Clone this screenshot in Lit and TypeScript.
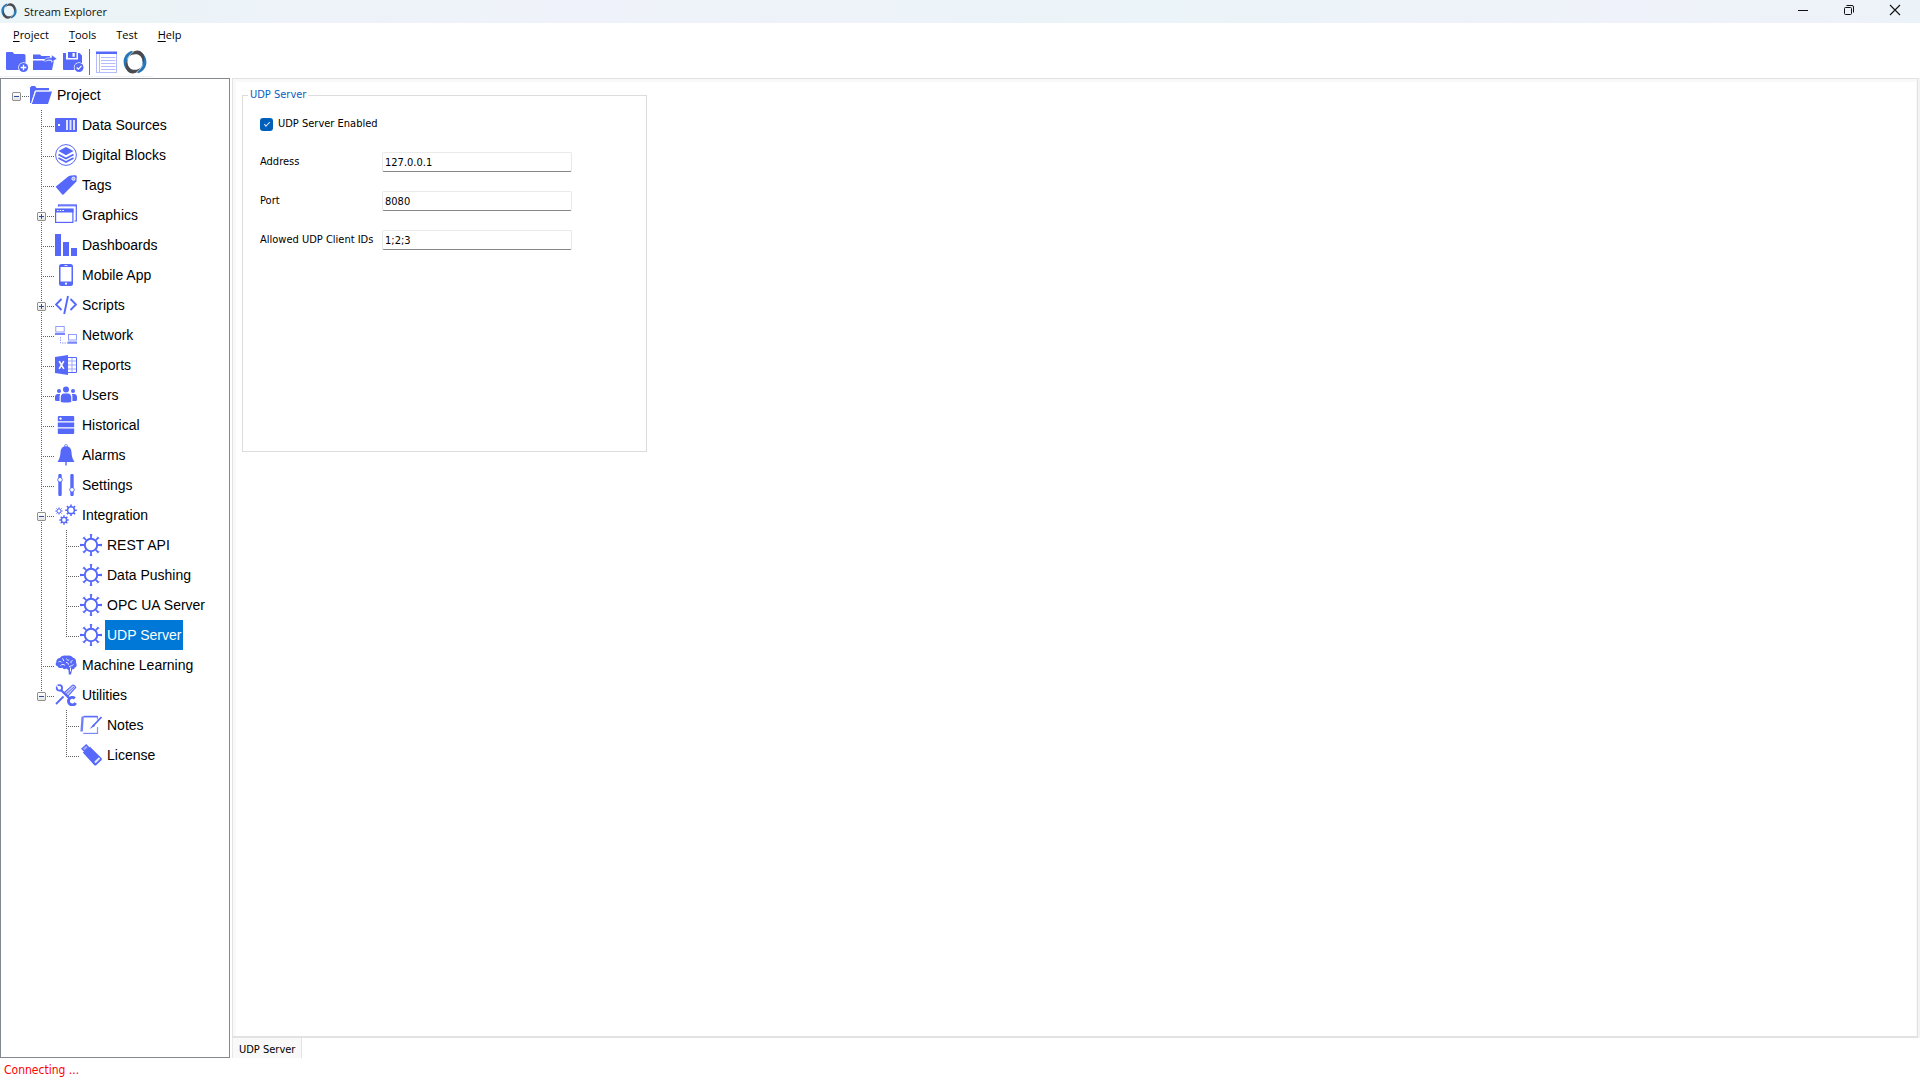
import { LitElement, html, css, svg, nothing, type TemplateResult, type SVGTemplateResult } from "lit";
import { customElement, property, state } from "lit/decorators.js";
import { classMap } from "lit/directives/class-map.js";

const GEAR = svg`
  <g stroke="currentColor" stroke-width="1.8" fill="none">
    <circle cx="11" cy="11" r="6.200" stroke-width="2" />
    <path d="M11 0v4M11 18v4M0 11h4M18 11h4M3.4 3.4l2.8 2.8M15.8 15.8l2.8 2.8M3.4 18.6l2.8-2.8M15.8 6.2l2.8-2.8" />
    <path d="M9.5 .9h3M9.5 21.1h3M.9 9.5v3M21.1 9.5v3" stroke-width="1" opacity=".5" />
    <path d="M2.500 5l2.500-2.500M17 2.500L19.500 5M2.500 17L5 19.500M17 19.500l2.500-2.500" stroke-width="1" opacity=".5" />
  </g>`;

const smallGear = (cx: number, cy: number, r: number, w: number) => {
  const teeth = Array.from({ length: 8 }, (_, i) => {
    const a = (i * Math.PI) / 4;
    const [c, s] = [Math.cos(a), Math.sin(a)];
    const [inner, outer] = [r, r + w * 1.5];
    return `M${cx + c * inner} ${cy + s * inner}L${cx + c * outer} ${cy + s * outer}`;
  }).join("");
  return svg`<circle cx=${cx} cy=${cy} r=${r} fill="none" stroke="currentColor" stroke-width=${w} />
    <path d=${teeth} stroke="currentColor" stroke-width=${w} />`;
};

const ICONS: Record<string, SVGTemplateResult> = {
  folder: svg`
    <path d="M0 19V3.5L1.5 2H5l1.5 2H19v2.5H5L1.2 19z" fill="currentColor" />
    <path d="M6 7.5h16L18 20H1.8z" fill="currentColor" />
    <path d="M1.6 18.5L5.4 7H20" fill="none" stroke="#fff" stroke-width=".8" />`,
  source: svg`
    <rect y="4" width="22" height="14" rx="1" fill="currentColor" />
    <path d="M11 6h2v10h-2zM14.5 6h2v10h-2zM18 6h2v10h-2z" fill="#dfe3ff" />
    <rect x="3" y="10" width="2" height="2" fill="#fff" />`,
  blocks: svg`
    <circle cx="11" cy="11" r="10.4" fill="none" stroke="currentColor" stroke-width="1" />
    <path d="M11 3l7.5 4-7.5 4.2L3.500 7z" fill="currentColor" />
    <path d="M3.500 10.500l7.500 4 7.500-4M3.500 14l7.500 4 7.500-4" fill="none" stroke="currentColor" stroke-width="1.7" />`,
  tag: svg`
    <path d="M.6 12.800L13.500 2.200Q16 .9 20.500 1.200Q21.800 1.500 21.800 3l-.4 4.500L8.500 20.500Q7.700 21 7 20.200z" fill="currentColor" />
    <circle cx="18.500" cy="4.700" r="1.600" fill="#9ba6ff" stroke="#fff" stroke-width=".9" />`,
  windows: svg`
    <path d="M3.500 2.500V1H21.300V17H19.500" fill="none" stroke="currentColor" stroke-width="1.200" />
    <path d="M3 .5h18.800v2H3z" fill="currentColor" opacity=".7" />
    <rect x=".6" y="5.500" width="17.300" height="12.900" fill="#fff" stroke="currentColor" stroke-width="1.200" />
    <path d="M0 4.500h18.500v4H0z" fill="currentColor" />
    <path d="M2 6.500h1.500M4.700 6.500h1.500M7.400 6.500h1.500" stroke="#fff" stroke-width="1.200" />`,
  bars: svg`<path d="M0 0h6v22H0zM8 8h6v14H8zM16 14h6v8h-6z" fill="currentColor" />`,
  phone: svg`
    <rect x="4" width="14" height="22" rx="2.500" fill="currentColor" />
    <path d="M5.500 3h11v14.500h-11z" fill="#fff" />
    <path d="M9.500 1.500h3" stroke="#fff" stroke-width=".8" /><circle cx="11" cy="19.700" r="1.100" fill="#fff" />`,
  code: svg`<path d="M6.500 5L1 10.500 6.500 16M15.500 5l5.500 5.500-5.500 5.500M13 2L9.200 20" fill="none" stroke="currentColor" stroke-width="1.900" />`,
  network: svg`
    <g fill="none" stroke="currentColor" stroke-width=".9" opacity=".7">
      <rect x=".8" y="2.500" width="8.400" height="5.500" /><rect x="13.500" y="10.500" width="8" height="5.500" />
      <path d="M5.500 13v6h7" stroke-dasharray="1.500 1" />
    </g>
    <path d="M0 9h10v2H0zM12.500 17.500h9.500v2.200h-9.500z" fill="currentColor" opacity=".8" />`,
  excel: svg`
    <path d="M12 3.500h9.500v15H12" fill="#fff" stroke="currentColor" stroke-width="1" />
    <path d="M12 7h9.500M12 11h9.500M12 15h9.500M17 3.500v15" stroke="currentColor" stroke-width=".9" opacity=".6" />
    <path d="M0 3L13 1v20L0 19z" fill="currentColor" />
    <path d="M4.200 7.200l4.600 7.600M8.800 7.200l-4.600 7.600" stroke="#fff" stroke-width="1.600" />`,
  users: svg`
    <g fill="currentColor">
      <circle cx="11" cy="5.500" r="3" /><circle cx="4" cy="7" r="2" /><circle cx="18" cy="7" r="2" />
      <path d="M5.800 18V13Q6.200 9.700 9 9.500h4q2.800.2 3.200 3.500v5q-5 1.200-10.400 0z" />
      <path d="M0 16.500V12.500Q.3 10.200 2.500 10h2.600Q4.500 11.500 4.600 13v4Q2 17.200 0 16.500zM22 16.500V12.500Q21.700 10.200 19.500 10h-2.600q.6 1.500.5 3v4q2.600.2 4.600-.5z" />
    </g>`,
  database: svg`
    <path d="M3.500 2h15l.7.700V7.200H2.800V2.700zM2.800 8.500h16.400v4.700H2.800zM2.800 14.600h16.400v4.600l-.8.800h-15l-.6-.8z" fill="currentColor" />
    <circle cx="5.500" cy="4.600" r="1.200" fill="#fff" />`,
  bell: svg`
    <circle cx="11" cy="2" r="1.500" fill="none" stroke="currentColor" stroke-width=".7" />
    <path d="M11 2.300c4 0 5.300 3 5.500 6 .2 4 1 6.500 3 9.700H2.500c2-3.200 2.800-5.700 3-9.700.2-3 1.500-6 5.500-6zM10.300 18h1.400v3.500h-1.400z" fill="currentColor" />`,
  sliders: svg`
    <path d="M5 1.500v19M17 1.500v19" stroke="currentColor" stroke-width="3.400" stroke-linecap="round" />
    <g fill="#fff" stroke="currentColor" stroke-width=".9"><circle cx="5" cy="5.800" r="2.300" /><circle cx="17" cy="15.800" r="2.300" /></g>`,
  gears: svg`${smallGear(4, 7, 2.1, 1)}${smallGear(16, 6.200, 3.400, 1.600)}${smallGear(9, 16, 2.600, 1.400)}`,
  gear: GEAR,
  brain: svg`
    <path d="M11.500 14.500c-2 1.300-3.500.5-4-.8-2.800.8-4.600 0-4.800-1.500C.6 12 .1 9.500 1.300 8.200 1.100 5.500 3 4 4.800 4 6.500 1.500 9.500 1 11.500 1.800c3-1 5.800.2 6.600 2 2.400.6 3.400 2.800 2.900 5 1.300 2 .6 4.200-1.200 4.700-.2 1.500-1.500 2-2.600 1.700L16 20.500h-2.200l-.3-4.200z" fill="currentColor" />
    <path d="M3.500 8c1.500-1 2.500-.5 3.200.4M7 4.500c1 .2 1.800 1.200 1.500 2.500M5.500 11.500c1.500-1.500 3.500-1.300 4.500 0M11.500 4.500c.3 1.500 1.500 2 2.700 1.500M11 8.500c1.500-.2 2.500.8 2.400 2.200M17.500 6.500c-1.500.3-2 1.500-1.300 2.700M14 12.800c1.500-1 3.500-1 4.500-2.300M15.500 13.500v4" fill="none" stroke="#fff" stroke-width=".9" />`,
  tools: svg`
    <path d="M1 20L8.500 12.500" stroke="currentColor" stroke-width="1.800" />
    <path d="M9 9L17.500 1.200q2.200-.3 3.300 2.200L13 12z" fill="#c7cdff" stroke="currentColor" stroke-width="1.100" />
    <path d="M11 10.300l8-7.300" stroke="currentColor" stroke-width=".9" />
    <path d="M5 5l9 9" stroke="currentColor" stroke-width="2.200" />
    <circle cx="4.400" cy="3.900" r="2.700" fill="#fff" stroke="currentColor" stroke-width="1.800" />
    <path d="M1.500 1.500l3 2.500" stroke="#fff" stroke-width="1.600" />
    <path d="M19.800 14.300a3.800 3.800 0 1 0 .8 4.700" fill="none" stroke="currentColor" stroke-width="2.900" />`,
  note: svg`
    <path d="M4 2.500h13.500v3M17.500 13v6.500H3.500" fill="none" stroke="currentColor" stroke-width="1.200" opacity=".7" />
    <path d="M1.500 2.500h2.300L2.800 17.500H.4zM3.500 1.700h14v1.700h-14z" fill="currentColor" opacity=".85" />
    <path d="M3 19.300h14.500" stroke="currentColor" stroke-width="1.500" opacity=".3" />
    <path d="M21.500 3L13 12" stroke="currentColor" stroke-width="1.700" />
    <path d="M13.500 10.300L9.500 15l5.500-3z" fill="currentColor" />`,
  usb: svg`
    <path d="M2 4.700L6.200 1l2.300 2.300L4.300 7z" fill="#aab3ff" stroke="currentColor" stroke-width="1.300" />
    <path d="M2.800 8.500L10 2.800 21.400 14q.9 1.300 0 2.200l-5.200 5q-1.200.9-2.100-.2z" fill="currentColor" />
    <path d="M14.200 17.700l4.700-4.500 1.300 1.500-4.500 4.500z" fill="#fff" opacity=".85" />`,
};

/** Two interlocking blue and charcoal crescents, used as the product mark. */
const ring = svg`
  <path d="M9 .8C3.500 2.500.5 7 .6 12c.1 3.500 1.400 6.300 3.600 8.500 1.200.5 2.200.3 2.800-.5C4.500 16 3.800 12.500 5 8.800 6 6.200 7.500 4 10.500 2.800z" fill="#2877b8" />
  <path d="M15 23.200c5.500-1.700 8.500-6.200 8.400-11.200-.1-3.500-1.400-6.300-3.600-8.500-1.200-.5-2.200-.3-2.800.5 2.500 4 3.200 7.500 2 11.200-1 2.600-2.500 4.800-5.500 6z" fill="#2877b8" />
  <path d="M6 6.500C8 2.500 11 .4 14.500.5c3.800.3 6 2.700 6.600 6.100.4 2.300.2 4.400-.9 6.400C19.500 8.800 18 5.300 14 4.300 11 3.800 8.500 4.500 6 6.500z" fill="#4b4b4f" />
  <path d="M18 17.500c-2 4-5 6.100-8.500 6-3.800-.3-6-2.700-6.600-6.100-.4-2.300-.2-4.400.9-6.400C4.500 15.200 6 18.700 10 19.700c3 .5 5.500-.2 8-2.200z" fill="#4b4b4f" />
  <path d="M4.300 9.500C5.500 6 7.800 3.500 10.500 2M19.700 14.500c-1.200 3.500-3.500 6-6.200 7.500" fill="none" stroke="#dfeaf2" stroke-width=".7" />`;

const TOOLS: Record<string, SVGTemplateResult> = {
  newProject: svg`
    <path d="M1 3Q1 2 2 2h5.500l1.700 2H19q1.500 0 1.500 1.500V20H2q-1 0-1-1z" fill="currentColor" />
    <circle cx="18.500" cy="17.500" r="5.300" fill="#fff" /><circle cx="18.500" cy="17.500" r="4.600" fill="currentColor" />
    <path d="M18.500 14.700v5.600M15.700 17.500h5.600" stroke="#fff" stroke-width="1.300" />`,
  openProject: svg`
    <path d="M0 4.500h7L8.500 6H17v3H0zM0 10.500h21L19 20H0z" fill="currentColor" />
    <path d="M10 10.500q3.500-3.500 8.500-3V4.800L24 8.800l-5.500 3.400V10q-3.500-.5-6 1.200z" fill="currentColor" stroke="#fff" stroke-width=".6" />`,
  save: svg`
    <path d="M2 3h3v6.500h12V3h1.500L21 5.500V20H3q-1 0-1-1V3z" fill="currentColor" />
    <path d="M7 2h8.500v6H7z" fill="currentColor" /><path d="M11.500 3h2.200v3.800h-2.200z" fill="#fff" />
    <circle cx="18" cy="17.500" r="5.200" fill="#fff" /><circle cx="18" cy="17.500" r="4.500" fill="currentColor" />
    <path d="M15.700 17.500l1.700 1.700 3-3.300" stroke="#fff" stroke-width="1.200" fill="none" />`,
  form: svg`
    <rect x="1.500" y="2.500" width="20" height="20" fill="#fff" stroke="#b4bcff" />
    <path d="M1 1.500h21V4H1z" fill="currentColor" />
    <path d="M4.500 4v18M6 7.500h14.500M6 10.500h14.500M6 13.500h14.500M6 16.500h14.500M6 19.500h14.500" stroke="#b4bcff" />`,
  stream: ring,
};

interface Node {
  label: string;
  icon: string;
  closed?: boolean;
  children?: Node[];
}

const PROJECT: Node = {
  label: "Project",
  icon: "folder",
  children: [
    { label: "Data Sources", icon: "source" },
    { label: "Digital Blocks", icon: "blocks" },
    { label: "Tags", icon: "tag" },
    { label: "Graphics", icon: "windows", closed: true },
    { label: "Dashboards", icon: "bars" },
    { label: "Mobile App", icon: "phone" },
    { label: "Scripts", icon: "code", closed: true },
    { label: "Network", icon: "network" },
    { label: "Reports", icon: "excel" },
    { label: "Users", icon: "users" },
    { label: "Historical", icon: "database" },
    { label: "Alarms", icon: "bell" },
    { label: "Settings", icon: "sliders" },
    {
      label: "Integration",
      icon: "gears",
      children: [
        { label: "REST API", icon: "gear" },
        { label: "Data Pushing", icon: "gear" },
        { label: "OPC UA Server", icon: "gear" },
        { label: "UDP Server", icon: "gear" },
      ],
    },
    { label: "Machine Learning", icon: "brain" },
    {
      label: "Utilities",
      icon: "tools",
      children: [
        { label: "Notes", icon: "note" },
        { label: "License", icon: "usb" },
      ],
    },
  ],
};

@customElement("title-bar")
export class TitleBar extends LitElement {
  static styles = css`
    :host { display: block; }
    .bar {
      display: flex; align-items: center; height: 23px; padding: 0 2px 0 1px;
      background: linear-gradient(90deg, #ebf4f7, #eff2fa 30%, #ebf4f8 60%, #eff2fa 85%, #ecf3f8);
      font: 11px/16px "Open Sans", "Noto Sans", sans-serif; color: #111;
    }
    .mark { width: 16px; height: 16px; margin: 0 7px 2px 0; }
    .title { flex: 1; font: inherit; margin: 0; }
    .ctl { width: 46px; height: 23px; padding: 0 0 3px; border: 0; background: none; display: grid; place-items: center; color: #111; }
    .ctl svg { width: 12px; height: 12px; }
  `;
  render() {
    return html`<header class="bar">
      <svg class="mark" viewBox="0 0 24 24">${ring}</svg>
      <h1 class="title">Stream Explorer</h1>
      <button class="ctl" aria-label="Minimize"><svg viewBox="0 0 12 12"><path d="M1 6.500h10" stroke="currentColor" /></svg></button>
      <button class="ctl" aria-label="Restore"><svg viewBox="0 0 12 12" fill="none" stroke="currentColor"><rect x="1.500" y="3.500" width="7" height="7" rx="1" /><path d="M3.500 1.500H9q1.500 0 1.500 1.500v5.500" /></svg></button>
      <button class="ctl" aria-label="Close"><svg viewBox="0 0 12 12"><path d="M1 1l10 10M11 1L1 11" stroke="currentColor" stroke-width="1.100" /></svg></button>
    </header>`;
  }
}

@customElement("project-tree")
export class ProjectTree extends LitElement {
  @property() selected = "";
  @state() private toggled = new Set<string>();

  static styles = css`
    :host { display: block; box-sizing: border-box; border: 1px solid #828790; background: #fff; padding: 1px 0 0 4px; overflow: auto; }
    ul { list-style: none; margin: 0; padding: 0; }
    .kids { padding-left: 25px; }
    .kids > li {
      background: repeating-linear-gradient(#606060 0 1px, transparent 1px 2px) 11px 0 / 1px 100% no-repeat;
    }
    .kids > li:last-child { background-size: 1px 17px; }
    .row { display: flex; align-items: center; height: 30px; }
    .joint {
      width: 25px; height: 30px; display: grid; box-sizing: border-box; padding: 12px 0 0 7px;
      background: repeating-linear-gradient(90deg, #606060 0 1px, transparent 1px 2px) 11px 16px / 13px 1px no-repeat;
    }
    .toggle {
      width: 9px; height: 9px; padding: 0; box-sizing: border-box; border: 1px solid #919191; border-radius: 1px;
      outline: 1px solid #fff; color: #2f4f9d;
      background:
        linear-gradient(currentColor, currentColor) 1px 3px / 5px 1px no-repeat,
        linear-gradient(#fff, #e4e4e4);
    }
    .toggle.closed {
      background:
        linear-gradient(currentColor, currentColor) 1px 3px / 5px 1px no-repeat,
        linear-gradient(currentColor, currentColor) 3px 1px / 1px 5px no-repeat,
        linear-gradient(#fff, #e4e4e4);
    }
    .icon { width: 22px; height: 22px; margin-right: 3px; color: #5568fa; }
    .name { height: 30px; border: 0; padding: 0 2px; background: none; color: #000; font: 14px/30px "Liberation Sans", Arial, sans-serif; white-space: nowrap; }
    .name.on { background: #0078d7; color: #fff; }
  `;

  private toggle(label: string) {
    const next = new Set(this.toggled);
    if (!next.delete(label)) next.add(label);
    this.toggled = next;
  }

  private node(n: Node): TemplateResult {
    const closed = Boolean(n.closed) !== this.toggled.has(n.label);
    const branch = n.closed || n.children;
    return html`<li>
      <div class="row">
        <span class="joint">${branch
          ? html`<button class=${classMap({ toggle: true, closed })} aria-label="Toggle ${n.label}" aria-expanded=${!closed} @click=${() => this.toggle(n.label)}></button>`
          : nothing}</span>
        <svg class="icon" viewBox="0 0 22 22">${ICONS[n.icon]}</svg>
        <button class=${classMap({ name: true, on: n.label === this.selected })} @click=${() => (this.selected = n.label)}>${n.label}</button>
      </div>
      ${n.children && !closed ? html`<ul class="kids">${n.children.map((c) => this.node(c))}</ul>` : nothing}
    </li>`;
  }

  render() {
    return html`<ul>${this.node(PROJECT)}</ul>`;
  }
}

@customElement("udp-settings")
export class UdpSettings extends LitElement {
  static styles = css`
    :host { display: block; font: 11px/14px "DejaVu Sans Condensed", "DejaVu Sans", sans-serif; color: #000; }
    .group {
      box-sizing: border-box; max-width: 405px; min-height: 364px; margin: 0; padding: 15px 17px 0;
      border: 1px solid #dcdcdc; min-width: 0;
    }
    .legend { color: #0a5fc4; padding: 0 2px; margin-left: -12px; }
    .enable { display: flex; align-items: center; gap: 5px; height: 14px; }
    .tick { appearance: none; width: 13px; height: 13px; margin: 0; border-radius: 3px; background: #005fb8; display: grid; place-items: center; }
    .tick:checked::before { content: ""; width: 5px; height: 2px; border: solid #dbeaf7; border-width: 0 0 1px 1px; rotate: -45deg; margin-bottom: 2px; }
    .fields { display: grid; grid-template-columns: 122px minmax(0, 190px); row-gap: 19px; align-items: center; margin-top: 21px; }
    .box {
      box-sizing: border-box; width: 100%; height: 20px; padding: 0 2px; font: inherit; color: inherit;
      border: 1px solid #e9e9e9; border-bottom-color: #868686; border-radius: 2px; background: #fff; outline: none;
    }
  `;
  render() {
    return html`<fieldset class="group">
      <legend class="legend">UDP Server</legend>
      <label class="enable"><input class="tick" type="checkbox" checked />UDP Server Enabled</label>
      <div class="fields">
        <label for="address">Address</label><input class="box" id="address" value="127.0.0.1" />
        <label for="port">Port</label><input class="box" id="port" value="8080" />
        <label for="clients">Allowed UDP Client IDs</label><input class="box" id="clients" value="1;2;3" />
      </div>
    </fieldset>`;
  }
}

@customElement("app-root")
export class AppRoot extends LitElement {
  static styles = css`
    :host { display: flex; flex-direction: column; min-height: 100vh; background: #fff; font: 11px/14px "DejaVu Sans Condensed", "DejaVu Sans", sans-serif; color: #000; }
    .menu { display: flex; align-items: center; gap: 20px; height: 24px; padding-left: 13px; }
    .entry { border: 0; padding: 0; background: none; color: #000; font: 11px/16px "Open Sans", "Noto Sans", sans-serif; }
    .key { text-decoration: underline; text-underline-offset: 2px; }
    .tools { display: flex; align-items: center; align-self: flex-start; height: 29px; gap: 4px; padding: 0 6px 0 5px; border-bottom: 1px solid #f0f0f8; margin-bottom: 1px; }
    .tool { border: 0; padding: 0; background: none; width: 24px; height: 24px; color: #5568fa; }
    .tool svg { display: block; width: 24px; height: 24px; }
    .rule { width: 1px; height: 26px; background: #707070; margin-right: 1px; }
    .work { flex: 1; display: grid; grid-template-columns: 230px minmax(0, 1fr); column-gap: 2px; }
    .view { display: flex; flex-direction: column; }
    .page { flex: 1; border: 1px solid #e2e2e2; border-bottom-width: 2px; margin-right: 2px; box-shadow: inset 3px 3px #f9f9f9, inset -1px 0 #f9f9f9, 2px 0 #f3f3f3; padding: 9px; }
    .tabs { display: flex; height: 20px; }
    .tab { border: 0; border-right: 1px solid #e2e2e2; border-left: 1px solid #e8e8e8; background: #f9f9f9; padding: 3px 6px 0; font: inherit; color: inherit; }
    .status { color: #f00; font-size: 12px; height: 22px; line-height: 24px; padding-left: 4px; }
  `;

  private entry(label: string, keyed = true) {
    return html`<button class="entry">${keyed ? html`<span class="key">${label[0]}</span>${label.slice(1)}` : label}</button>`;
  }

  private tool(name: string, title: string) {
    return html`<button class="tool" aria-label=${title}><svg viewBox="0 0 24 24">${TOOLS[name]}</svg></button>`;
  }

  render() {
    return html`
      <title-bar></title-bar>
      <nav class="menu">${this.entry("Project")}${this.entry("Tools")}${this.entry("Test", false)}${this.entry("Help")}</nav>
      <div class="tools">
        ${this.tool("newProject", "New project")}${this.tool("openProject", "Open project")}${this.tool("save", "Save")}
        <span class="rule"></span>
        ${this.tool("form", "Properties")}${this.tool("stream", "Stream")}
      </div>
      <main class="work">
        <project-tree selected="UDP Server"></project-tree>
        <section class="view">
          <div class="page"><udp-settings></udp-settings></div>
          <div class="tabs"><button class="tab">UDP Server</button></div>
        </section>
      </main>
      <footer class="status">Connecting ...</footer>
    `;
  }
}
